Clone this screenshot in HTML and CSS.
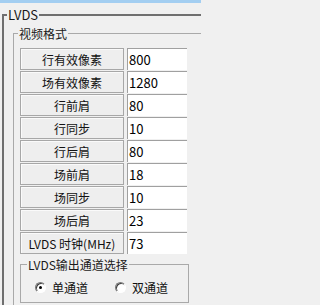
FILE: index.html
```html
<!DOCTYPE html>
<html>
<head>
<meta charset="utf-8">
<link rel="stylesheet" href="styles.css">
</head>
<body>
<div class="titlebar"></div>
<fieldset class="grp outer">
  <legend class="lg-outer">LVDS</legend>
  <fieldset class="grp inner">
    <legend class="lg-inner">视频格式</legend>
    <div class="form">
      <div class="lbl">行有效像素</div><div class="val">800</div>
      <div class="lbl">场有效像素</div><div class="val">1280</div>
      <div class="lbl">行前肩</div><div class="val">80</div>
      <div class="lbl">行同步</div><div class="val">10</div>
      <div class="lbl">行后肩</div><div class="val">80</div>
      <div class="lbl">场前肩</div><div class="val">18</div>
      <div class="lbl">场同步</div><div class="val">10</div>
      <div class="lbl">场后肩</div><div class="val">23</div>
      <div class="lbl">LVDS 时钟(MHz)</div><div class="val">73</div>
    </div>
    <fieldset class="grp chan">
      <legend class="lg-chan">LVDS输出通道选择</legend>
      <div class="radios">
        <div class="radio"><span class="circle checked"></span><span>单通道</span></div>
        <div class="radio second"><span class="circle"></span><span>双通道</span></div>
      </div>
    </fieldset>
  </fieldset>
</fieldset>
</body>
</html>
```
FILE: styles.css
```css
html, body {
  margin: 0;
  padding: 0;
  overflow: hidden;
  background: #f0f0f0;
}
body {
  width: 201px;
  height: 305px;
  font-family: "Noto Sans CJK SC", "Noto Sans", sans-serif;
  font-size: 12px;
  color: #000;
}
.titlebar {
  height: 3px;
  background: #a3cef1;
}
.grp {
  margin: 0;
  padding: 0;
  min-width: 0;
}
.grp legend {
  padding: 0 1px;
  margin: 0;
}
.outer {
  margin: 4px 0 0 2px;
  width: 199px;
  height: 298px;
  box-sizing: border-box;
  border: 2px solid #6f6f6f;
  border-right: none;
  border-bottom: none;
  padding: 0 0 0 3px;
}
.lg-outer {
  font-size: 13px;
  line-height: 16px;
  color: #1a1a1a;
}
.inner {
  margin: 3px 0 0 6px;
  height: 279px;
  box-sizing: border-box;
  border: 1px solid #a9a9a9;
  border-right: none;
  border-bottom: none;
  padding: 0 0 0 4px;
}
.lg-inner {
  font-size: 12px;
  line-height: 15px;
  color: #1a1a1a;
}
.form {
  margin: 7px 0 0 2px;
  display: grid;
  grid-template-columns: 104px 60px;
  grid-auto-rows: 22px;
  column-gap: 3px;
  row-gap: 1px;
}
.lbl {
  box-sizing: border-box;
  border: 1px solid #a7a7a7;
  box-shadow: inset 1px 1px 0 #fafafa;
  background: #eeeeee;
  display: flex;
  align-items: center;
  justify-content: center;
  font-size: 12px;
  color: #111;
  white-space: nowrap;
}
.val {
  box-sizing: border-box;
  background: #fff;
  border-top: 1px solid #a0a0a0;
  border-left: 1px solid #a0a0a0;
  display: flex;
  align-items: center;
  padding-left: 1px;
  font-size: 13px;
  color: #000;
}
.chan {
  margin: 3px 0 0 2px;
  width: 169px;
  height: 46px;
  box-sizing: border-box;
  border: 1px solid #a9a9a9;
  padding: 0 0 0 6px;
}
.lg-chan {
  font-size: 12px;
  line-height: 15px;
  color: #1a1a1a;
}
.radios {
  display: flex;
  align-items: center;
  height: 30px;
  padding-left: 8px;
}
.radio {
  display: flex;
  align-items: center;
  gap: 6px;
  font-size: 12px;
  color: #111;
}
.radio.second {
  margin-left: 27px;
}
.circle {
  width: 11px;
  height: 11px;
  box-sizing: border-box;
  border-radius: 50%;
  border: 1px solid;
  border-color: #7a7a7a #ffffff #ffffff #7a7a7a;
  background: #fff;
  box-shadow: inset 1px 1px 0 #404040;
  position: relative;
}
.circle.checked::after {
  content: "";
  position: absolute;
  left: 3px;
  top: 3px;
  width: 3px;
  height: 3px;
  border-radius: 50%;
  background: #000;
}
```
